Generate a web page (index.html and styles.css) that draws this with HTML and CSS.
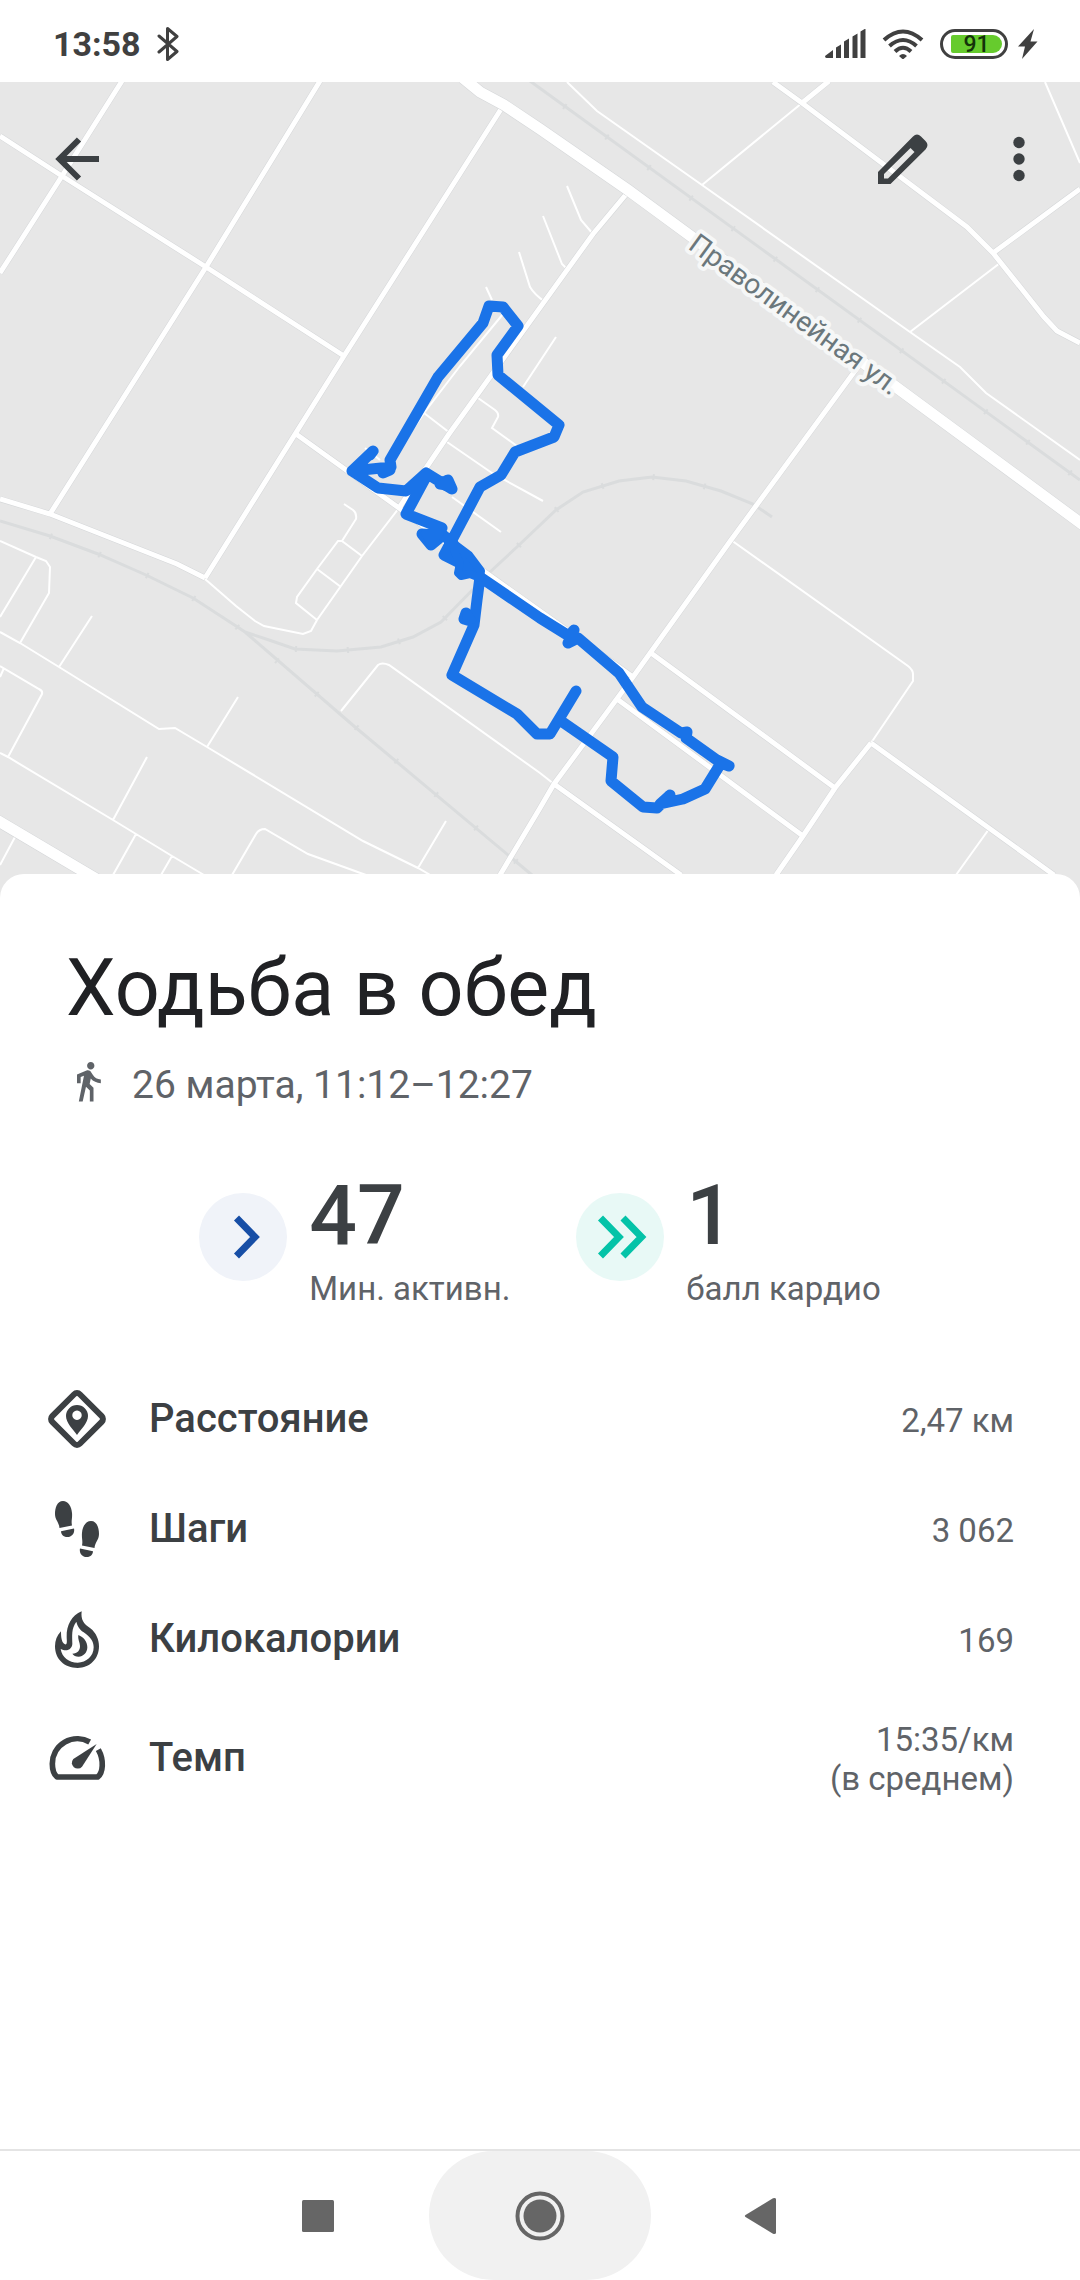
FILE: index.html
```html
<!DOCTYPE html>
<html lang="ru">
  <head>
    <meta charset="UTF-8" />
    <meta name="viewport" content="width=device-width, initial-scale=1.0" />
    <title>Ходьба в обед</title>
    <link rel="stylesheet" href="styles.css">
  </head>
  <body>
    <header class="status-bar">
      <div class="status-left">
        <span class="clock">13:58</span>
        <svg class="bluetooth" width="22" height="36" viewBox="0 0 22 36"><path d="M2 10L20 25.500 10.500 33.500V2.500L20 10.500 2 26"/></svg>
      </div>
      <div class="status-right">
        <svg width="41" height="30" viewBox="0 0 41 30"><path d="M0 27l8-6v8H1.500q-1.500 0-1.500-2zM11 18.500l5-3V29h-5zM19 12.500l5-3V29h-5zM27.500 7.500l5-3V29h-5zM35.500 2.500l5-3V29h-5z"/></svg>
        <svg class="wifi" width="42" height="30" viewBox="0 0 42 30"><path d="M2 11Q21-6 40 11M7.500 17Q21 5 34.500 17M13 22.500Q21 15 29 22.500"/><path class="dot" d="M17 27q4-4 8 0l-4 3.500z"/></svg>
        <div class="battery"><span class="battery-level">91</span></div>
        <svg class="bolt" width="20" height="30" viewBox="0 0 20 30"><path d="M16 0L0 17.500h7L4 30 19.500 12.500H12.500z"/></svg>
      </div>
    </header>

    <section class="map">
      <svg class="map-canvas" viewBox="0 82 1080 816" preserveAspectRatio="xMidYMin slice">
        <!-- railways -->
        <g id="rails">
          <path class="rail" d="M530 81L1080 480M0 521L50 536 98 554 146 575 193 598 236 626 245 632 355 727 532 875M245 632L269 640 295 649 337 651 381 647 413 637 441 622 489 573 518 546 556 510 583 492 619 481 652 477 686 481 721 491 753 504 772 517"/>
          <path class="ticks" d="M564 106L1080 480M50 536L98 554 146 575 193 598 236 626 276 660 532 875M295 649L337 651 381 647 413 637 441 622 489 573 518 546 556 510 583 492 619 481 652 477 686 481 721 491"/>
        </g>
        <!-- small streets -->
        <path class="lane" d="M802 103L702 185M1045 82L1080 163M567 82L597 111 702 185 910 332 960 367 986 393 1080 460M1000 263L910 332
          M567 186L581 220 593 234M543 216L562 264 568 270M519 252L530 287Q534 294 545 302M486 287L492 300M556 337L523 387
          M503 314L460 366 424 413 385 470M424 413L450 433M478 398L495 410Q499 413 498 417L492 428 517 446M447 442L492 473 543 501M452 497L501 532M380 460L365 448
          M399 508L362 556 317 620 311 631 303 634 264 626 255 621 236 606 205 579M344 504L353 510Q357 513 356 519L342 541 362 556M342 541H338L317 569 297 597 296 603 317 620M317 569L341 587
          M0 541L36 557 46 561 50 567 49 593 20 643M36 557L0 617M0 632L20 643 59 667 159 729 175 728 207 747 363 841 418 868 432 876
          M92 616L59 667M238 697L207 747M446 821L418 868M0 666L39 689Q43 691 42 694L8 757M4 668L0 677
          M0 753L8 757 113 820 136 834 172 856 204 875M147 757L113 820M136 834L113 875M172 856L161 875M15 837L0 865
          M232 875L256 834Q259 829 265 829L308 854 366 875M341 711L378 665Q382 662 389 665L540 773 554 784
          M731 540L908 666Q913 670 913 674V681L871 743M989 829L956 875"/>
        <!-- streets: grey casing first, white on top -->
        <path class="street-casing" d="M122 81L62 176 0 273M320 81L206 267 50 514M503 106L344 356 205 578M0 136L62 176 206 267 344 356M296 434L399 508 485 572 633 677M628 192L593 234 449 434 399 508
          M0 499L50 514 177 564 205 578M773 82L802 103 967 227 993 253 1044 317 1057 331 1080 343M829 81L802 103M993 253L1080 189
          M860 364L731 540 633 677 554 784 540 808 500 875M554 784L681 875M651 653L835 788M617 699L803 836M871 743L835 788 803 836 776 875M871 743L1054 875"/>
        <path class="street" d="M122 81L62 176 0 273M320 81L206 267 50 514M503 106L344 356 205 578M0 136L62 176 206 267 344 356M296 434L399 508 485 572 633 677M628 192L593 234 449 434 399 508
          M0 499L50 514 177 564 205 578M773 82L802 103 967 227 993 253 1044 317 1057 331 1080 343M829 81L802 103M993 253L1080 189
          M860 364L731 540 633 677 554 784 540 808 500 875M554 784L681 875M651 653L835 788M617 699L803 836M871 743L835 788 803 836 776 875M871 743L1054 875"/>
        <path class="avenue-casing" d="M463 78L480 92 504 105 540 129 628 190 858 359 1090 530M-10 816L120 893"/>
        <path class="avenue" d="M463 78L480 92 504 105 540 129 628 190 858 359 1090 530M-10 816L120 893"/>
        <text class="street-name" transform="translate(687 248) rotate(36)">Праволинейная ул.</text>
        <!-- recorded walk -->
        <path class="track" d="M391 467L390 460 438 377 483 323 489 306 503 307 518 326 497 355 498 375 559 425 554 437 515 452 501 475 480 487 452 540
          M390 470L383 473 391 467 352 471 373 451 370 455M352 471L378 488 406 491 426 473 452 489 448 480 440 484M426 477L406 514 442 528 437 535 422 534 431 545 443 535 453 543
          M452 540L444 555 460 563M480 577L477 600 474 625 452 675 517 714 537 734H550L576 691M561 721L613 757 611 781 643 807 657 808 670 795 660 804 683 799 705 789 721 763 729 766 717 760
          M721 763L686 738 687 732 681 733 642 707 619 673 578 638 568 643 574 630 569 636 540 618 480 577M466 613L464 619 474 622"/>
        <path class="track-fill" d="M453 543L469 555 481 571 480 578 470 574 461 576 458 573 460 563 455 553zM425 533H440L431 544zM448 480L452 489 440 485zM467 613L472 620 466 620z"/>
      </svg>
      <nav class="toolbar">
        <button type="button" class="icon-btn" aria-label="Назад">
          <svg width="48" height="48" viewBox="0 0 48 48"><path class="line" d="M46 24H6M26 4.500L6.500 24 26 43.500"/></svg>
        </button>
        <button type="button" class="icon-btn push" aria-label="Изменить">
          <svg width="54" height="54" viewBox="0 0 54 54"><path fill-rule="evenodd" d="M2 52V40L37 4.500Q41 .500 45 4.500L49.500 9Q53.500 13 49.500 17.500L14.500 52zM8 46.500H12L38.500 20 34.500 16 8 42z"/></svg>
        </button>
        <button type="button" class="icon-btn" aria-label="Ещё">
          <svg width="54" height="54" viewBox="0 0 54 54"><circle cx="27" cy="10.500" r="5.700"/><circle cx="27" cy="27" r="5.700"/><circle cx="27" cy="43.500" r="5.700"/></svg>
        </button>
      </nav>
    </section>

    <main class="sheet">
      <h1>Ходьба в обед</h1>
      <p class="when">
        <svg width="44" height="48" viewBox="0 1 24 26"><path d="M13.500 5.500c1.100 0 2-.9 2-2s-.9-2-2-2-2 .9-2 2 .9 2 2 2zM9.800 8.900L7 23h2.100l1.800-8 2.100 2v6h2v-7.500l-2.100-2 .6-3C14.800 12 16.800 13 19 13v-2c-1.900 0-3.500-1-4.300-2.400l-1-1.600c-.4-.6-1-1-1.700-1-.3 0-.5.100-.8.100L6 8.300V13h2V9.600l1.800-.7"/></svg>
        26 марта, 11:12–12:27
      </p>

      <div class="scores">
        <div class="score">
          <span class="badge badge-move"><svg width="88" height="88" viewBox="0 0 88 88"><path d="M37.500 25L56 44 37.500 63"/></svg></span>
          <div>
            <div class="score-value">47</div>
            <div class="score-label">Мин. активн.</div>
          </div>
        </div>
        <div class="score">
          <span class="badge badge-heart"><svg width="88" height="88" viewBox="0 0 88 88"><path d="M24.500 25L43 44 24.500 63M47 25L65.500 44 47 63"/></svg></span>
          <div>
            <div class="score-value">1</div>
            <div class="score-label">балл кардио</div>
          </div>
        </div>
      </div>

      <dl class="metrics">
        <div class="metric">
          <dt>
            <svg width="60" height="60" viewBox="0 0 60 60"><rect class="outline" x="10.500" y="10.500" width="39" height="39" rx="4" transform="rotate(45 30 30)"/><path fill-rule="evenodd" d="M30 46C26 40 19 34 19 27a11 11 0 0 1 22 0C41 34 34 40 30 46zM30 21.500a4.700 4.700 0 1 0 .01 0z"/></svg>
            Расстояние
          </dt>
          <dd>2,47 км</dd>
        </div>
        <div class="metric">
          <dt>
            <svg width="60" height="60" viewBox="0 0 60 60"><path id="shoe" d="M16 2C10 2 8 9 8 15c0 6 4 8 4.500 14L25 26.500C24 22 25.500 19 25 14 24.500 7 21 2 16 2zM14 32.200L27 29.500C28 34 25 38 20.500 38 16 38 14 35 14 32.200z"/><use href="#shoe" transform="translate(60 20) scale(-1 1)"/></svg>
            Шаги
          </dt>
          <dd>3 062</dd>
        </div>
        <div class="metric">
          <dt>
            <svg width="60" height="60" viewBox="0 0 180 180"><path fill-rule="evenodd" d="M104 7C101 32 110 45 130 58 148 72 156 93 156 112 156 150 128 177 92 177 52 177 24 150 24 112 24 94 30 80 42 67 42 85 44 102 54 106 62 108 59 92 59 83 58 50 74 19 104 7zM88 38C92 52 96 60 110 70 130 84 140 97 140 115 140 142 118 161 92 161 66 161 45 145 41 120 62 130 76 118 76 104 76 80 72 60 88 38z"/><path d="M94 78C110 85 121 97 121 115 121 132 108 143 95 143 86 143 80 140 76 134 92 134 99 124 99 112 99 100 92 92 94 78z"/></svg>
            Килокалории
          </dt>
          <dd>169</dd>
        </div>
        <div class="metric">
          <dt>
            <svg width="60" height="60" viewBox="0 0 180 180"><path class="outline-wide" d="M128 42A75 75 0 0 0 16 107C16 124 21 139 30 147H152C168 135 172 97 154 65"/><path d="M149 48L105 116A17 17 0 1 1 79 93z"/></svg>
            Темп
          </dt>
          <dd>15:35/км<br>(в среднем)</dd>
        </div>
      </dl>
    </main>

    <nav class="system-nav">
      <button type="button" aria-label="Недавние"><svg width="50" height="50" viewBox="0 0 50 50"><rect x="9" y="9" width="32" height="32" rx="1.500"/></svg></button>
      <button type="button" class="pressed" aria-label="Домой"><svg width="50" height="50" viewBox="0 0 50 50"><circle cx="25" cy="25" r="16.500"/><circle class="ring" cx="25" cy="25" r="22.500"/></svg></button>
      <button type="button" aria-label="Назад"><svg width="50" height="50" viewBox="0 0 50 50"><path d="M8.500 24L36 7.200Q38.500 6.500 39 8V42Q38.500 43.500 36 42.800L8.500 26Q7.200 25 8.500 24z"/></svg></button>
    </nav>
  </body>
</html>
```
FILE: styles.css
```css
* {
  margin: 0;
  padding: 0;
  box-sizing: border-box;
  font-family: Roboto, "Noto Sans", sans-serif;
}

body {
  display: flex;
  flex-direction: column;
  min-height: 100vh;
  background-color: #fff;
  color: #3c4043;
}

svg {
  display: block;
  flex: none;
  fill: currentColor;
}

button {
  border: none;
  background: none;
  color: inherit;
  cursor: pointer;
  display: flex;
  align-items: center;
  justify-content: center;
}

/* status bar */
.status-bar {
  height: 82px;
  padding: 6px 42px 0 53px;
  display: flex;
  align-items: center;
  justify-content: space-between;
  color: #404040;
}

.status-left,
.status-right {
  display: flex;
  align-items: center;
  gap: 16px;
}

.clock {
  font-size: 34px;
  line-height: 40px;
  font-weight: 700;
}

.bluetooth {
  fill: none;
  stroke: currentColor;
  stroke-width: 3;
  stroke-linejoin: round;
  stroke-linecap: round;
}

.wifi {
  fill: none;
  stroke: currentColor;
  stroke-width: 4;
}

.wifi .dot {
  fill: currentColor;
  stroke: none;
}

.battery {
  width: 68px;
  height: 30px;
  padding: 3px 3px 3px 8px;
  border: 3px solid #404040;
  border-radius: 15px;
}

.battery-level {
  display: block;
  width: 51px;
  height: 18px;
  border-radius: 2px 9px 9px 2px;
  background-color: #66cb2d;
  color: #14330a;
  font-size: 23px;
  line-height: 19px;
  font-weight: 500;
  text-align: center;
}

.bolt {
  margin-left: -6px;
}

/* map */
.map {
  position: relative;
  height: 816px;
  background-color: #e7e7e7;
  overflow: hidden;
}

.map-canvas {
  width: 100%;
  height: 100%;
  fill: none;
}

.rail {
  stroke: #dadcdd;
  stroke-width: 3;
}

.ticks {
  stroke: #dadcdd;
  stroke-width: 6;
  stroke-dasharray: 2 50;
}

.lane {
  stroke: #fff;
  stroke-width: 2;
}

.street-casing {
  stroke: #d5d7d9;
  stroke-width: 6;
}

.street {
  stroke: #fff;
  stroke-width: 5;
}

.avenue-casing {
  stroke: #d5d7d9;
  stroke-width: 12;
}

.avenue {
  stroke: #fff;
  stroke-width: 11;
}

.street-name {
  fill: #6b777c;
  stroke: #f6f7f7;
  stroke-width: 8;
  stroke-linejoin: round;
  paint-order: stroke;
  font-size: 28px;
}

.track {
  stroke: #1a73e8;
  stroke-width: 11;
  stroke-linejoin: round;
  stroke-linecap: round;
}

.track-fill {
  fill: #1a73e8;
  stroke: #1a73e8;
  stroke-width: 8;
  stroke-linejoin: round;
}

.toolbar {
  position: absolute;
  top: 41px;
  left: 0;
  right: 0;
  padding: 0 25px 0 41px;
  display: flex;
  gap: 44px;
}

.icon-btn {
  width: 72px;
  height: 72px;
  border-radius: 50%;
}

.icon-btn .line {
  fill: none;
  stroke: currentColor;
  stroke-width: 6;
}

.push {
  margin-left: auto;
}

/* details sheet */
.sheet {
  position: relative;
  flex: 1;
  margin-top: -24px;
  padding-top: 68px;
  border-radius: 24px 24px 0 0;
  background-color: #fff;
}

h1 {
  padding: 0 66px;
  color: #202124;
  font-size: 79px;
  line-height: 92px;
  font-weight: 400;
}

.when {
  display: flex;
  align-items: center;
  gap: 22px;
  margin-top: 27px;
  padding: 0 66px;
  color: #5f6368;
  font-size: 39px;
  line-height: 48px;
}

.scores {
  display: flex;
  justify-content: center;
  gap: 66px;
  margin-top: 64px;
}

.score {
  display: flex;
  gap: 22px;
}

.badge {
  width: 88px;
  height: 88px;
  margin-top: 20px;
  border-radius: 50%;
}

.badge svg {
  fill: none;
  stroke: currentColor;
  stroke-width: 7;
}

.badge-move {
  background-color: #f0f3f9;
  color: #174ea6;
}

.badge-heart {
  background-color: #e8f9f6;
  color: #04c3a8;
}

.score-value {
  font-size: 84px;
  line-height: 86px;
  font-weight: 500;
}

.score-label {
  margin-top: 10px;
  color: #5f6368;
  font-size: 33px;
  line-height: 40px;
}

.metrics {
  margin-top: 55px;
}

.metric {
  display: flex;
  align-items: center;
  justify-content: space-between;
  min-height: 110px;
  padding: 24px 66px 24px 47px;
}

.metric dt {
  display: flex;
  align-items: center;
  gap: 42px;
  font-size: 40px;
  line-height: 48px;
  font-weight: 500;
}

.metric dd {
  padding-top: 2px;
  color: #5f6368;
  font-size: 33px;
  line-height: 39px;
  text-align: right;
}

.outline {
  fill: none;
  stroke: currentColor;
  stroke-width: 6;
}

.outline-wide {
  fill: none;
  stroke: currentColor;
  stroke-width: 17;
  stroke-linejoin: round;
}

/* system navigation */
.system-nav {
  display: flex;
  justify-content: center;
  height: 131px;
  border-top: 2px solid #e4e4e4;
  color: #666;
}

.system-nav button {
  width: 222px;
}

.system-nav .pressed {
  border-radius: 65px;
  background-color: #f1f1f1;
}

.ring {
  fill: none;
  stroke: currentColor;
  stroke-width: 4;
}
```
